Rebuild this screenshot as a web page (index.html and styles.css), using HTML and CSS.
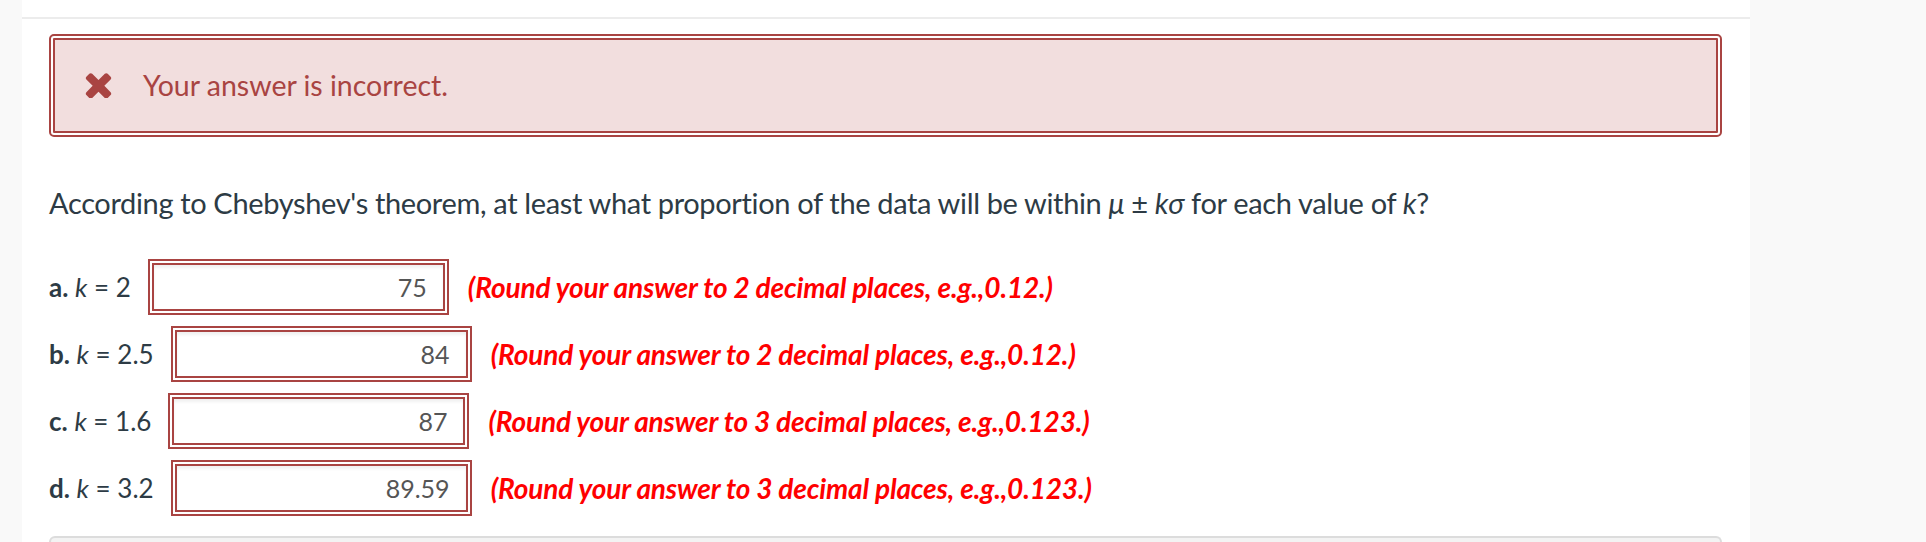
FILE: index.html
```html
<!DOCTYPE html>
<html lang="en">
<head>
<meta charset="utf-8">
<title>Chebyshev question</title>
<link rel="stylesheet" href="styles.css">
</head>
<body>
<div class="page">
  <aside class="side side-left"></aside>
  <main class="main">
    <div class="topbar"></div>
    <div class="content">
      <div class="alert">
        <svg class="alert-icon" viewBox="110 266 1188 1260" width="27" height="27" aria-hidden="true">
          <path fill="#a94442" d="M1298 1322q0 40-28 68l-136 136q-28 28-68 28t-68-28l-294-294-294 294q-28 28-68 28t-68-28l-136-136q-28-28-28-68t28-68l294-294-294-294q-28-28-28-68t28-68l136-136q28-28 68-28t68 28l294 294 294-294q28-28 68-28t68 28l136 136q28 28 28 68t-28 68l-294 294 294 294q28 28 28 68z"/>
        </svg>
        <span class="alert-text">Your answer is incorrect.</span>
      </div>
      <p class="question">According to Chebyshev's theorem, at least what proportion of the data will be within <i>μ</i> ± <i>kσ</i> for each value of <i>k</i>?</p>
      <div class="rows">
        <div class="row">
          <span class="label"><b>a.</b> <i>k</i> = 2</span>
          <span class="field"><span class="value">75</span></span>
          <span class="hint">(Round your answer to 2 decimal places, e.g.,0.12.)</span>
        </div>
        <div class="row">
          <span class="label"><b>b.</b> <i>k</i> = 2.5</span>
          <span class="field"><span class="value">84</span></span>
          <span class="hint">(Round your answer to 2 decimal places, e.g.,0.12.)</span>
        </div>
        <div class="row">
          <span class="label"><b>c.</b> <i>k</i> = 1.6</span>
          <span class="field"><span class="value">87</span></span>
          <span class="hint">(Round your answer to 3 decimal places, e.g.,0.123.)</span>
        </div>
        <div class="row">
          <span class="label"><b>d.</b> <i>k</i> = 3.2</span>
          <span class="field"><span class="value">89.59</span></span>
          <span class="hint">(Round your answer to 3 decimal places, e.g.,0.123.)</span>
        </div>
      </div>
      <div class="footer-box"></div>
    </div>
  </main>
  <aside class="side side-right"></aside>
</div>
</body>
</html>
```
FILE: styles.css
```css
html, body {
  margin: 0;
  padding: 0;
  background: #ffffff;
  font-family: Lato, "Open Sans", "DejaVu Sans", sans-serif;
  color: #2d3b45;
}
.page {
  display: flex;
  width: 1926px;
  height: 542px;
  overflow: hidden;
}
.side {
  background: #f9f9f9;
  flex: none;
}
.side-left { width: 22px; }
.side-right { width: 176px; }
.main {
  flex: 1;
  min-width: 0;
  background: #ffffff;
}
.topbar {
  height: 17px;
  border-bottom: 2px solid #ececec;
}
.content {
  padding: 15px 28px 0 27px;
}
.alert {
  display: flex;
  align-items: center;
  height: 103px;
  box-sizing: border-box;
  border: 6px double #a94442;
  border-radius: 5px;
  background: #f2dede;
  background-clip: padding-box;
  padding-left: 30px;
  padding-bottom: 2px;
  color: #a94442;
}
.alert-icon {
  flex: none;
  margin-right: 31px;
}
.alert-text {
  font-size: 28.5px;
}
.question {
  margin: 0;
  padding-top: 46px;
  font-size: 29px;
  line-height: 40px;
  letter-spacing: -0.35px;
}
.question i { font-style: italic; }
.rows {
  margin-top: 36px;
  display: flex;
  flex-direction: column;
  gap: 11px;
}
.row {
  display: flex;
  align-items: center;
  height: 56px;
}
.label {
  font-size: 26px;
  margin-right: 17px;
}
.label b { font-weight: 700; }
.field {
  flex: none;
  width: 301px;
  height: 56px;
  box-sizing: border-box;
  border: 6px double #a94442;
  background: #ffffff;
  box-shadow: inset 0 3px 3px rgba(0, 0, 0, 0.06);
  display: flex;
  align-items: center;
  justify-content: flex-end;
  padding-right: 16px;
}
.value {
  font-size: 25px;
  color: #555555;
}
.hint {
  margin-left: 19px;
  font-size: 28px;
  font-weight: 700;
  font-style: italic;
  color: #ff0000;
  letter-spacing: -0.15px;
}
.footer-box {
  margin-top: 20px;
  height: 30px;
  border: 2px solid #dcdcdc;
  border-bottom: none;
  border-radius: 6px 6px 0 0;
  background: #f3f3f3;
}
```
